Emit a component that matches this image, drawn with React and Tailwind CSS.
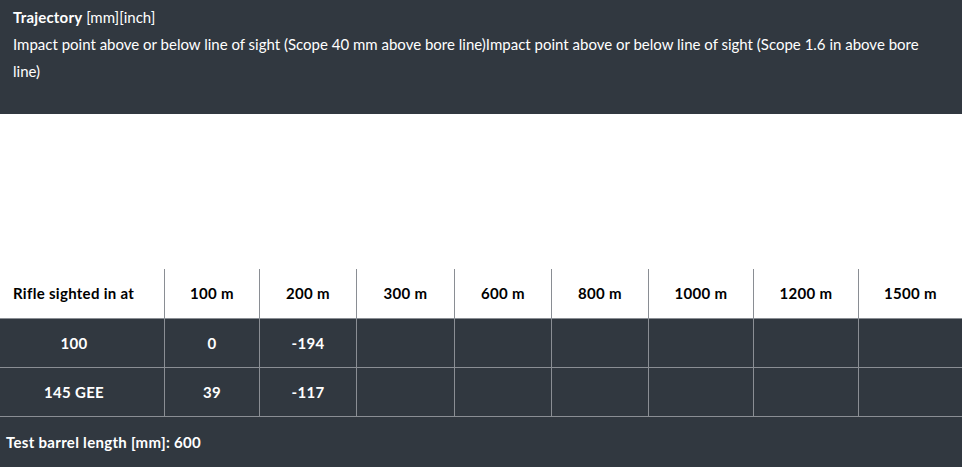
import React from "react";

const cols = ["100 m", "200 m", "300 m", "600 m", "800 m", "1000 m", "1200 m", "1500 m"];
const rows = [
  ["100", "0", "-194", "", "", "", "", "", ""],
  ["145 GEE", "39", "-117", "", "", "", "", "", ""],
];
const grid = "grid grid-cols-[164px_95px_97px_98px_97px_97px_105px_105px_1fr]";

export default function App() {
  return (
    <div className="w-[962px] bg-white text-[15px]" style={{ fontFamily: "Lato, 'Noto Sans', sans-serif" }}>
      <div className="bg-[#313840] text-white pl-[13px] pr-[20px] pt-[4px] pb-[29px] h-[114px]">
        <div className="leading-[27px]">
          <span className="font-bold tracking-[0.2px]">Trajectory</span> [mm][inch]
        </div>
        <div className="leading-[27px]">
          Impact point above or below line of sight (Scope 40 mm above bore line)Impact point above or below line of sight (Scope 1.6 in above bore line)
        </div>
      </div>
      <div className="h-[155px]" />
      <div className={`${grid} h-[50px] border-b border-[#8a8e94] text-black font-bold tracking-[0.3px]`}>
        <div className="flex items-center pl-[13px]">Rifle sighted in at</div>
        {cols.map((c) => (
          <div key={c} className="flex items-center justify-center border-l border-[#8a8e94]">{c}</div>
        ))}
      </div>
      {rows.map((r, i) => (
        <div key={i} className={`${grid} h-[49px] border-b border-[#8a8e94] bg-[#313840] text-white font-bold tracking-[0.3px]`}>
          {r.map((v, j) => (
            <div
              key={j}
              className={
                j === 0
                  ? "flex items-center justify-center pr-[16px]"
                  : "flex items-center justify-center border-l border-[#8a8e94]"
              }
            >
              {v}
            </div>
          ))}
        </div>
      ))}
      <div className="h-[50px] bg-[#313840] text-white font-bold tracking-[0.3px] flex items-center pl-[6px]">
        Test barrel length [mm]: 600
      </div>
    </div>
  );
}
